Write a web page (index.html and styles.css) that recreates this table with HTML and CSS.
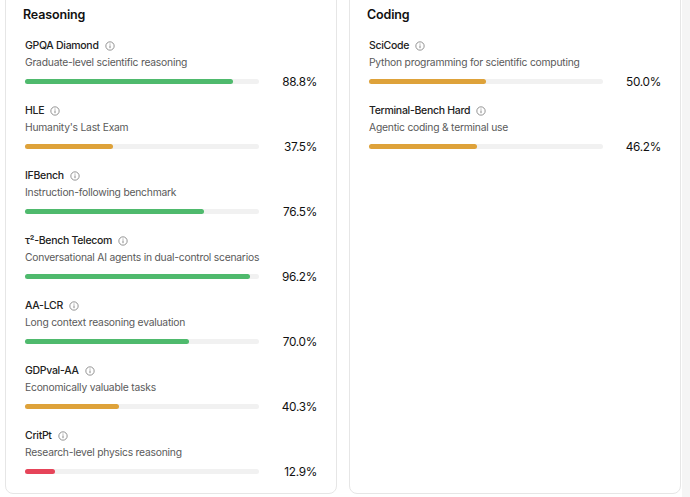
FILE: index.html
```html
<!DOCTYPE html>
<html>
<head>
<meta charset="utf-8">
<link rel="stylesheet" href="styles.css">
</head>
<body>
<div class="page">
  <section class="card">
    <h2 class="title">Reasoning</h2>
    <div class="item">
      <div class="name">GPQA Diamond <span class="info"><svg viewBox="0 0 12 12" width="10" height="10"><circle cx="6" cy="6" r="5" fill="none" stroke="currentColor" stroke-width="0.9"/><line x1="6" y1="5.3" x2="6" y2="8.6" stroke="currentColor" stroke-width="1"/><circle cx="6" cy="3.6" r="0.6" fill="currentColor"/></svg></span></div>
      <div class="desc">Graduate-level scientific reasoning</div>
      <div class="row"><div class="track"><div class="fill green" style="width:88.8%"></div></div><div class="val">88.8%</div></div>
    </div>
    <div class="item">
      <div class="name">HLE <span class="info"><svg viewBox="0 0 12 12" width="10" height="10"><circle cx="6" cy="6" r="5" fill="none" stroke="currentColor" stroke-width="0.9"/><line x1="6" y1="5.3" x2="6" y2="8.6" stroke="currentColor" stroke-width="1"/><circle cx="6" cy="3.6" r="0.6" fill="currentColor"/></svg></span></div>
      <div class="desc">Humanity's Last Exam</div>
      <div class="row"><div class="track"><div class="fill orange" style="width:37.5%"></div></div><div class="val">37.5%</div></div>
    </div>
    <div class="item">
      <div class="name">IFBench <span class="info"><svg viewBox="0 0 12 12" width="10" height="10"><circle cx="6" cy="6" r="5" fill="none" stroke="currentColor" stroke-width="0.9"/><line x1="6" y1="5.3" x2="6" y2="8.6" stroke="currentColor" stroke-width="1"/><circle cx="6" cy="3.6" r="0.6" fill="currentColor"/></svg></span></div>
      <div class="desc">Instruction-following benchmark</div>
      <div class="row"><div class="track"><div class="fill green" style="width:76.5%"></div></div><div class="val">76.5%</div></div>
    </div>
    <div class="item">
      <div class="name">τ²-Bench Telecom <span class="info"><svg viewBox="0 0 12 12" width="10" height="10"><circle cx="6" cy="6" r="5" fill="none" stroke="currentColor" stroke-width="0.9"/><line x1="6" y1="5.3" x2="6" y2="8.6" stroke="currentColor" stroke-width="1"/><circle cx="6" cy="3.6" r="0.6" fill="currentColor"/></svg></span></div>
      <div class="desc">Conversational AI agents in dual-control scenarios</div>
      <div class="row"><div class="track"><div class="fill green" style="width:96.2%"></div></div><div class="val">96.2%</div></div>
    </div>
    <div class="item">
      <div class="name">AA-LCR <span class="info"><svg viewBox="0 0 12 12" width="10" height="10"><circle cx="6" cy="6" r="5" fill="none" stroke="currentColor" stroke-width="0.9"/><line x1="6" y1="5.3" x2="6" y2="8.6" stroke="currentColor" stroke-width="1"/><circle cx="6" cy="3.6" r="0.6" fill="currentColor"/></svg></span></div>
      <div class="desc">Long context reasoning evaluation</div>
      <div class="row"><div class="track"><div class="fill green" style="width:70%"></div></div><div class="val">70.0%</div></div>
    </div>
    <div class="item">
      <div class="name">GDPval-AA <span class="info"><svg viewBox="0 0 12 12" width="10" height="10"><circle cx="6" cy="6" r="5" fill="none" stroke="currentColor" stroke-width="0.9"/><line x1="6" y1="5.3" x2="6" y2="8.6" stroke="currentColor" stroke-width="1"/><circle cx="6" cy="3.6" r="0.6" fill="currentColor"/></svg></span></div>
      <div class="desc">Economically valuable tasks</div>
      <div class="row"><div class="track"><div class="fill orange" style="width:40.3%"></div></div><div class="val">40.3%</div></div>
    </div>
    <div class="item">
      <div class="name">CritPt <span class="info"><svg viewBox="0 0 12 12" width="10" height="10"><circle cx="6" cy="6" r="5" fill="none" stroke="currentColor" stroke-width="0.9"/><line x1="6" y1="5.3" x2="6" y2="8.6" stroke="currentColor" stroke-width="1"/><circle cx="6" cy="3.6" r="0.6" fill="currentColor"/></svg></span></div>
      <div class="desc">Research-level physics reasoning</div>
      <div class="row"><div class="track"><div class="fill red" style="width:12.9%"></div></div><div class="val">12.9%</div></div>
    </div>
  </section>
  <section class="card">
    <h2 class="title">Coding</h2>
    <div class="item">
      <div class="name">SciCode <span class="info"><svg viewBox="0 0 12 12" width="10" height="10"><circle cx="6" cy="6" r="5" fill="none" stroke="currentColor" stroke-width="0.9"/><line x1="6" y1="5.3" x2="6" y2="8.6" stroke="currentColor" stroke-width="1"/><circle cx="6" cy="3.6" r="0.6" fill="currentColor"/></svg></span></div>
      <div class="desc">Python programming for scientific computing</div>
      <div class="row"><div class="track"><div class="fill orange" style="width:50%"></div></div><div class="val">50.0%</div></div>
    </div>
    <div class="item">
      <div class="name">Terminal-Bench Hard <span class="info"><svg viewBox="0 0 12 12" width="10" height="10"><circle cx="6" cy="6" r="5" fill="none" stroke="currentColor" stroke-width="0.9"/><line x1="6" y1="5.3" x2="6" y2="8.6" stroke="currentColor" stroke-width="1"/><circle cx="6" cy="3.6" r="0.6" fill="currentColor"/></svg></span></div>
      <div class="desc">Agentic coding &amp; terminal use</div>
      <div class="row"><div class="track"><div class="fill orange" style="width:46.2%"></div></div><div class="val">46.2%</div></div>
    </div>
  </section>
</div>
</body>
</html>
```
FILE: styles.css
```css
html {
  background: #f5f5f5;
}
body {
  margin: 0;
  width: 682px;
  height: 497px;
  background: #ffffff;
  font-family: Inter, "Noto Sans", sans-serif;
  color: #1d1d1d;
  overflow: hidden;
}
.page {
  display: grid;
  grid-template-columns: 332px 332px;
  column-gap: 12px;
  padding-left: 5px;
  margin-top: -12px;
}
.card {
  border: 1px solid #e6e6e6;
  border-radius: 8px;
  padding: 16px 19px 9px 19px;
  height: 506px;
  box-sizing: border-box;
}
.title {
  margin: 0 0 13px -2px;
  font-size: 12.5px;
  line-height: 20px;
  font-weight: 600;
  color: #111;
  letter-spacing: -0.15px;
}
.item {
  margin-bottom: 13px;
}
.name {
  display: flex;
  align-items: center;
  gap: 6px;
  font-size: 10.5px;
  line-height: 16px;
  font-weight: 450;
  color: #222;
  letter-spacing: -0.3px;
}
.info {
  display: inline-flex;
  color: #707070;
}
.desc {
  font-size: 10.3px;
  line-height: 16px;
  color: #5a5a5a;
  letter-spacing: -0.22px;
}
.row {
  display: flex;
  align-items: center;
  margin-top: 3px;
  height: 17px;
}
.track {
  width: 234px;
  height: 5px;
  border-radius: 3px;
  background: #f1f1f1;
}
.fill {
  height: 100%;
  border-radius: 3px;
}
.green { background: #4fba6d; }
.orange { background: #dea23a; }
.red { background: #e64459; }
.val {
  flex: 1;
  text-align: right;
  font-size: 11.8px;
  color: #111;
  letter-spacing: -0.3px;
}
```
